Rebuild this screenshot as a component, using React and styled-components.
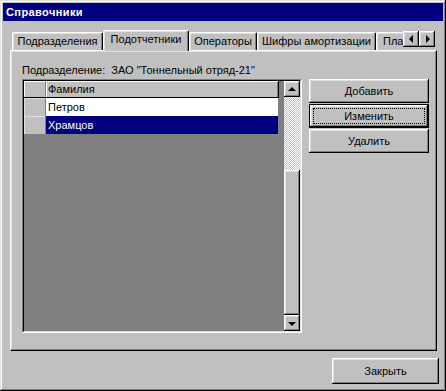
import React from 'react';
import styled, { createGlobalStyle } from 'styled-components';

const GlobalStyle = createGlobalStyle`
  html, body {
    margin: 0;
    padding: 0;
    background: #c0c0c0;
  }
  body {
    font-family: "Liberation Sans", Arial, sans-serif;
    font-size: 11px;
    color: #000;
  }
  * {
    box-sizing: border-box;
  }
`;

const raised = 'inset -1px -1px #000, inset 1px 1px #fff, inset -2px -2px #808080, inset 2px 2px #dfdfdf';

const Window = styled.div`
  width: 446px;
  height: 391px;
  padding: 3px;
  display: flex;
  flex-direction: column;
  background: #c0c0c0;
  box-shadow: inset -1px -1px #000, inset 1px 1px #dfdfdf, inset -2px -2px #808080, inset 2px 2px #fff;
`;

const TitleBar = styled.div`
  height: 18px;
  padding-left: 3px;
  background: #000080;
  color: #fff;
  font-weight: bold;
  font-size: 11px;
  letter-spacing: 0.4px;
  line-height: 18px;
`;

const Body = styled.div`
  flex: 1;
  display: flex;
  flex-direction: column;
  padding: 9px 6px 0 7px;
`;

const TabRow = styled.div`
  display: flex;
  height: 21px;
  margin-bottom: -1px;
  position: relative;
  z-index: 1;
`;

const TabList = styled.div`
  flex: 1;
  display: flex;
  align-items: flex-start;
  overflow: hidden;
  padding-left: 2px;
`;

const Tab = styled.div`
  flex: 0 0 ${(p) => p.$w}px;
  height: ${(p) => (p.$active ? 21 : 18)}px;
  margin-top: ${(p) => (p.$active ? 0 : 2)}px;
  border-top: 1px solid #fff;
  border-left: 1px solid #fff;
  border-right: 1px solid #000;
  border-radius: 2px 2px 0 0;
  box-shadow: inset -1px 0 #808080, inset 1px 1px #dfdfdf;
  background: #c0c0c0;
  line-height: ${(p) => (p.$active ? 17 : 16)}px;
  white-space: nowrap;
  overflow: hidden;
  padding-left: ${(p) => (p.$clip ? 6 : 0)}px;
  text-align: ${(p) => (p.$clip ? 'left' : 'center')};
`;

const TabArrows = styled.div`
  display: flex;
  margin: 1px 2px 0 0;
`;

const SmallButton = styled.div`
  width: 16px;
  height: 16px;
  display: flex;
  align-items: center;
  justify-content: center;
  background: #c0c0c0;
  box-shadow: ${raised};
`;

const Arrow = styled.span`
  width: 0;
  height: 0;
  border-style: solid;
  ${(p) =>
    p.$dir === 'left'
      ? 'border-width: 4px 4px 4px 0; border-color: transparent #000 transparent transparent; margin-left: -1px;'
      : p.$dir === 'right'
      ? 'border-width: 4px 0 4px 4px; border-color: transparent transparent transparent #000; margin-left: 1px;'
      : p.$dir === 'up'
      ? 'border-width: 0 4px 4px 4px; border-color: transparent transparent #000 transparent; margin-top: -1px;'
      : 'border-width: 4px 4px 0 4px; border-color: #000 transparent transparent transparent; margin-top: 1px;'}
`;

const Panel = styled.div`
  height: 301px;
  padding: 13px 0 0 11px;
  background: #c0c0c0;
  border-top: 1px solid #fff;
  border-left: 1px solid #fff;
  border-right: 1px solid #000;
  border-bottom: 1px solid #000;
  box-shadow: inset -1px -1px #808080, inset 1px 1px #dfdfdf;
`;

const Caption = styled.div`
  height: 13px;
  line-height: 13px;
  white-space: pre;
`;

const Content = styled.div`
  display: flex;
  gap: 7px;
  margin-top: 2px;
`;

const GridFrame = styled.div`
  width: 280px;
  height: 254px;
  border: 1px solid;
  border-color: #808080 #fff #fff #808080;
`;

const GridInner = styled.div`
  height: 100%;
  display: flex;
  background: #808080;
  border: 1px solid;
  border-color: #000 #dfdfdf #dfdfdf #000;
`;

const Table = styled.div`
  flex: 1;
  display: flex;
  flex-direction: column;
`;

const Row = styled.div`
  display: flex;
  height: ${(p) => (p.$header ? 17 : 18)}px;
  width: 255px;
  border-bottom: ${(p) => (p.$header ? '1px solid #000' : 'none')};
`;

const IndicatorCell = styled.div`
  flex: 0 0 22px;
  background: #c0c0c0;
  border-right: 1px solid #808080;
  box-shadow: ${(p) => (p.$header ? 'inset 1px 1px #fff' : 'inset 1px 1px #dfdfdf')};
`;

const NameCell = styled.div`
  flex: 1;
  padding-left: 2px;
  line-height: ${(p) => (p.$header ? 16 : 18)}px;
  background: ${(p) => (p.$header ? '#c0c0c0' : p.$selected ? '#000080' : '#fff')};
  color: ${(p) => (p.$selected ? '#fff' : '#000')};
  border-right: 1px solid ${(p) => (p.$header ? '#000' : '#808080')};
  box-shadow: ${(p) => (p.$header ? 'inset 1px 1px #fff, inset -1px 0 #808080' : 'none')};
  white-space: nowrap;
`;

const ScrollBar = styled.div`
  flex: 0 0 16px;
  display: flex;
  flex-direction: column;
`;

const Track = styled.div`
  flex: 1;
  display: flex;
  flex-direction: column;
  background-color: #c0c0c0;
  background-image: conic-gradient(#fff 25%, #c0c0c0 0 50%, #fff 0 75%, #c0c0c0 0);
  background-size: 2px 2px;
`;

const TrackGap = styled.div`
  flex: 0 0 ${(p) => p.$size}px;
`;

const Thumb = styled.div`
  flex: 1;
  background: #c0c0c0;
  box-shadow: ${raised};
`;

const ButtonColumn = styled.div`
  display: flex;
  flex-direction: column;
  gap: 1px;
`;

const Button = styled.button`
  width: ${(p) => p.$w || 120}px;
  height: ${(p) => p.$h || 24}px;
  padding: 4px;
  display: flex;
  align-items: stretch;
  border: none;
  background: #c0c0c0;
  color: #000;
  font-family: "Liberation Sans", Arial, sans-serif;
  font-size: 11px;
  box-shadow: ${(p) =>
    p.$default
      ? 'inset 0 0 0 1px #000, inset -2px -2px #000, inset 2px 2px #fff, inset -3px -3px #808080, inset 3px 3px #dfdfdf'
      : raised};
`;

const ButtonLabel = styled.span`
  flex: 1;
  display: flex;
  align-items: center;
  justify-content: center;
  border: 1px ${(p) => (p.$focus ? 'dotted #000' : 'solid transparent')};
`;

const Footer = styled.div`
  display: flex;
  justify-content: flex-end;
  padding-top: 7px;
  margin-right: -2px;
`;

const tabs = [
  { label: 'Подразделения', w: 91 },
  { label: 'Подотчетники', w: 86, active: true },
  { label: 'Операторы', w: 68 },
  { label: 'Шифры амортизации', w: 119 },
  { label: 'Плановые счета', w: 70, clip: true },
];

const people = [
  { name: 'Петров' },
  { name: 'Храмцов', selected: true },
];

export default function App() {
  return (
    <>
      <GlobalStyle />
      <Window>
        <TitleBar>Справочники</TitleBar>
        <Body>
          <TabRow>
            <TabList>
              {tabs.map((t) => (
                <Tab key={t.label} $w={t.w} $active={t.active} $clip={t.clip}>
                  {t.label}
                </Tab>
              ))}
            </TabList>
            <TabArrows>
              <SmallButton>
                <Arrow $dir="left" />
              </SmallButton>
              <SmallButton>
                <Arrow $dir="right" />
              </SmallButton>
            </TabArrows>
          </TabRow>
          <Panel>
            <Caption>{'Подразделение:  ЗАО "Тоннельный отряд-21"'}</Caption>
            <Content>
              <GridFrame>
                <GridInner>
                  <Table>
                    <Row $header>
                      <IndicatorCell $header />
                      <NameCell $header>Фамилия</NameCell>
                    </Row>
                    {people.map((p) => (
                      <Row key={p.name}>
                        <IndicatorCell />
                        <NameCell $selected={p.selected}>{p.name}</NameCell>
                      </Row>
                    ))}
                  </Table>
                  <ScrollBar>
                    <SmallButton>
                      <Arrow $dir="up" />
                    </SmallButton>
                    <Track>
                      <TrackGap $size={73} />
                      <Thumb />
                    </Track>
                    <SmallButton>
                      <Arrow $dir="down" />
                    </SmallButton>
                  </ScrollBar>
                </GridInner>
              </GridFrame>
              <ButtonColumn>
                <Button>
                  <ButtonLabel>Добавить</ButtonLabel>
                </Button>
                <Button $default>
                  <ButtonLabel $focus>Изменить</ButtonLabel>
                </Button>
                <Button>
                  <ButtonLabel>Удалить</ButtonLabel>
                </Button>
              </ButtonColumn>
            </Content>
          </Panel>
          <Footer>
            <Button $w={107} $h={26}>
              <ButtonLabel>Закрыть</ButtonLabel>
            </Button>
          </Footer>
        </Body>
      </Window>
    </>
  );
}
